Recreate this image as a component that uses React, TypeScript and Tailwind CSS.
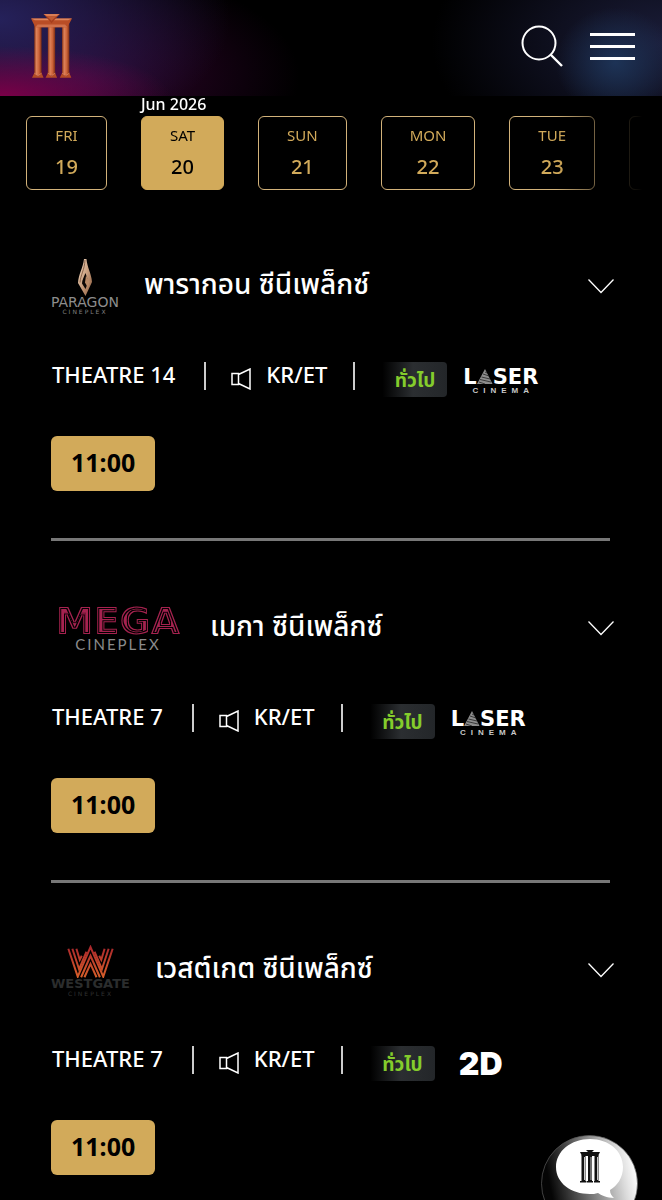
import { useState, type ReactNode } from 'react';

interface ShowDate {
  day: string;
  date: string;
  month?: string;
}

interface Cinema {
  id: string;
  name: string;
  logo: ReactNode;
  theatre: string;
  sound: string;
  system: 'laser' | '2d';
  times: string[];
}

const DATES: ShowDate[] = [
  { day: 'FRI', date: '19' },
  { day: 'SAT', date: '20', month: 'Jun 2026' },
  { day: 'SUN', date: '21' },
  { day: 'MON', date: '22' },
  { day: 'TUE', date: '23' }
];

function PillarLogo() {
  return (
    <svg viewBox="0 0 124 196" className="w-[41px] h-[66px]" aria-hidden="true">
      <defs>
        <linearGradient id="copper" x1="0" x2="1" y1="0" y2="0">
          <stop offset="0" stopColor="#8f3819" />
          <stop offset="0.3" stopColor="#dd8159" />
          <stop offset="0.65" stopColor="#cb6238" />
          <stop offset="1" stopColor="#7d2c12" />
        </linearGradient>
      </defs>
      {[10, 51, 94].map((x) => (
        <g key={x}>
          <rect x={x} y="32" width="22" height="154" fill="url(#copper)" />
          <path d={`M${x} 180 L${x - 7} 194 H${x + 28} L${x + 22} 180 L${x + 11} 188 Z`} fill="#b34b25" />
          <path d={`M${x} 180 L${x + 11} 188 L${x + 22} 180`} fill="none" stroke="#e0916c" strokeWidth="2" />
        </g>
      ))}
      <path d="M0 15 H124 L110 41 H13 Z" fill="#b94d26" />
      <path d="M0 15 H124 L112 20 H12 Z" fill="#dd865e" />
      <path d="M13 41 L20 33 H103 L110 41 Z" fill="#d0704a" />
      <path d="M38 1 H87 L62 29 Z" fill="#a83e1d" />
      <path d="M38 1 H87 L77 8 H48 Z" fill="#d97d55" />
      <path d="M48 8 H77 L62 22 Z" fill="#c05c35" />
    </svg>
  );
}

function ParagonLogo() {
  return (
    <div className="flex flex-col items-center text-center pt-1">
      <svg viewBox="0 0 28 74" className="w-[14px] h-[37px]" aria-hidden="true">
        <defs>
          <linearGradient id="flame" x1="0" x2="1" y1="0" y2="1">
            <stop offset="0" stopColor="#f3dcc4" />
            <stop offset="0.5" stopColor="#c99f7f" />
            <stop offset="1" stopColor="#8a5a3c" />
          </linearGradient>
        </defs>
        <path d="M12 0 H17 C18 16 27 30 28 46 L15 74 L0 48 C1 30 10 18 12 0 Z" fill="url(#flame)" />
        <path d="M15 28 C12 36 8 42 8 49 L15 60 L20 47 C20 40 17 35 15 28 Z" fill="#0c0705" />
        <path d="M16 33 L14 47 L20 58 L23 45 Z" fill="#b98a67" />
        <path d="M14 2 C13 22 5 32 4 47" fill="none" stroke="#6f4730" strokeWidth="1.5" />
      </svg>
      <span className="font-['DejaVu_Sans'] text-[14px] leading-3 text-[#8d8d8d]">PARAGON</span>
      <span className="font-['DejaVu_Sans'] text-[6px] leading-[7px] tracking-[2px] text-[#808080]">CINEPLEX</span>
    </div>
  );
}

function MegaLogo() {
  return (
    <div className="flex flex-col items-center pt-1">
      <svg viewBox="0 0 134 30" className="w-[134px] h-[30px]" role="img" aria-label="MEGA">
        <defs>
          {/* Outline ring with a lit core inside each stroke */}
          <filter id="neon" x="0" y="0" width="1" height="1">
            <feMorphology in="SourceGraphic" operator="erode" radius="1" result="inner" />
            <feComposite in="SourceGraphic" in2="inner" operator="out" result="ring" />
            <feMorphology in="SourceGraphic" operator="erode" radius="2" result="core" />
            <feMerge>
              <feMergeNode in="ring" />
              <feMergeNode in="core" />
            </feMerge>
          </filter>
        </defs>
        <text
          x="67"
          y="28"
          textAnchor="middle"
          fontFamily="DejaVu Sans"
          fontWeight="700"
          fontSize="38"
          fill="#a5224f"
          filter="url(#neon)"
        >
          MEGA
        </text>
      </svg>
      <span className="font-['Lato'] text-[15px] leading-4 tracking-[2px] text-[#8b8b8b]">CINEPLEX</span>
    </div>
  );
}

function WestgateLogo() {
  return (
    <div className="flex flex-col items-center pt-1">
      <svg viewBox="0 0 140 98" className="w-[47px] h-[33px]" aria-hidden="true">
        <defs>
          <linearGradient id="ember" x1="0" x2="0" y1="0" y2="98" gradientUnits="userSpaceOnUse">
            <stop offset="0" stopColor="#a8242c" />
            <stop offset="1" stopColor="#d8602a" />
          </linearGradient>
        </defs>
        <g fill="none" stroke="url(#ember)" strokeWidth="6">
          <path d="M4 11 L32 94 L70 6 L108 94 L136 11" />
          <path d="M16 11 L36 72 L58 20" />
          <path d="M28 11 L38 44 L44 32" />
          <path d="M124 11 L104 72 L82 20" />
          <path d="M112 11 L102 44 L96 32" />
          <path d="M42 96 L70 32 L98 96" />
          <path d="M52 96 L70 56 L88 96" />
        </g>
      </svg>
      <span className="font-['DejaVu_Sans'] font-bold text-[13px] leading-3 text-[#2b2d2d]">WESTGATE</span>
      <span className="font-['DejaVu_Sans'] text-[6px] leading-[7px] tracking-[2px] text-[#303232]">CINEPLEX</span>
    </div>
  );
}

function LaserLogo() {
  return (
    <div className="flex flex-col items-center text-white">
      <span className="flex items-center font-['DejaVu_Sans'] font-bold text-[21px] leading-4">
        L
        <svg viewBox="0 0 32 30" className="w-4 h-[15px]" role="img" aria-label="A">
          <path d="M16 0 L31 30 H0 Z" fill="#8c8c8c" />
          <path d="M16 6 L20 8 M12 10 L24 14 M9 16 L26 20 M6 21 L28 26 M4 26 L16 30" stroke="#1c1c1c" strokeWidth="1.5" />
        </svg>
        SER
      </span>
      <span className="font-['Liberation_Sans'] font-bold text-[8px] leading-[9px] tracking-[5px] pl-[5px] pt-px text-[#c9c9c9]">CINEMA</span>
    </div>
  );
}

function SpeakerIcon() {
  return (
    <svg viewBox="0 0 20 22" className="w-5 h-[22px] self-end" fill="none" stroke="white" strokeWidth="1.5" aria-hidden="true">
      <path d="M1 5.5 H7.5 V16.5 H1 Z M7.5 6.5 L19 1 V21 L7.5 15.5" />
    </svg>
  );
}

const CINEMAS: Cinema[] = [
  {
    id: 'paragon',
    name: 'พารากอน ซีนีเพล็กซ์',
    logo: <ParagonLogo />,
    theatre: 'THEATRE 14',
    sound: 'KR/ET',
    system: 'laser',
    times: ['11:00']
  },
  {
    id: 'mega',
    name: 'เมกา ซีนีเพล็กซ์',
    logo: <MegaLogo />,
    theatre: 'THEATRE 7',
    sound: 'KR/ET',
    system: 'laser',
    times: ['11:00']
  },
  {
    id: 'westgate',
    name: 'เวสต์เกต ซีนีเพล็กซ์',
    logo: <WestgateLogo />,
    theatre: 'THEATRE 7',
    sound: 'KR/ET',
    system: '2d',
    times: ['11:00']
  }
];

function Header() {
  return (
    <header className="h-24 pl-[31px] pr-[27px] flex items-center justify-between bg-black bg-[radial-gradient(ellipse_170px_50px_at_0%_100%,#7a0048_0%,transparent_100%),radial-gradient(ellipse_230px_130px_at_0%_20%,#25215a_0%,transparent_100%),radial-gradient(ellipse_220px_110px_at_12%_80%,#33042f_0%,transparent_100%),radial-gradient(ellipse_60px_55px_at_93%_65%,#1d3356_0%,transparent_100%),radial-gradient(ellipse_230px_140px_at_100%_45%,#1b1d3a_0%,transparent_100%)]">
      <a href="#home" aria-label="Home" className="-mt-1">
        <PillarLogo />
      </a>
      <div className="flex items-center gap-[27px] -mt-1">
        <button type="button" aria-label="Search">
          <svg viewBox="0 0 42 42" className="w-[42px] h-[42px]" fill="none" stroke="white" strokeWidth="2" aria-hidden="true">
            <circle cx="18" cy="18" r="16.5" />
            <path d="M29.5 29.5 L41 41" strokeWidth="2.4" />
          </svg>
        </button>
        <button type="button" aria-label="Menu" className="flex flex-col gap-[9px] w-[45px]">
          <span className="block h-[3px] w-full bg-white" />
          <span className="block h-[3px] w-full bg-white" />
          <span className="block h-[3px] w-full bg-white" />
        </button>
      </div>
    </header>
  );
}

function DateStrip() {
  const [selected, setSelected] = useState('20');

  return (
    <nav
      aria-label="Dates"
      className="flex items-end gap-[34px] pl-[26px] overflow-hidden [mask-image:linear-gradient(to_right,black_84%,transparent_97%)]"
    >
      {DATES.map((item) => (
        <div key={item.date} className="shrink-0">
          {item.month && <div className="h-5 text-base leading-4 font-medium">{item.month}</div>}
          <button
            type="button"
            onClick={() => setSelected(item.date)}
            className={`h-[74px] px-7 flex flex-col items-center justify-center rounded-md border ${
              selected === item.date ? 'border-[#d2aa5a] bg-[#d2aa5a] text-black' : 'border-[#d2b27a] text-[#d2aa5a]'
            }`}
          >
            <span className="text-[15px] leading-7">{item.day}</span>
            <span className="text-xl leading-9 font-medium">{item.date}</span>
          </button>
        </div>
      ))}
      <div className="shrink-0 w-20 h-[74px] rounded-md border border-[#d2b27a]" />
    </nav>
  );
}

function CinemaSection({ cinema }: { cinema: Cinema }) {
  const [open, setOpen] = useState(true);

  return (
    <section className="pb-[47px] mb-14 border-b-3 border-[#777777] last:border-b-0 last:mb-0 last:pb-6">
      {/* Cinema name */}
      <div className="h-15 flex items-center gap-[25px] -mr-1">
        {cinema.logo}
        <h2 className="text-[28px] leading-10 font-medium pb-1">{cinema.name}</h2>
        <button
          type="button"
          aria-label="Toggle showtimes"
          aria-expanded={open}
          onClick={() => setOpen(!open)}
          className={`ml-auto pt-0.5 ${open ? '' : 'rotate-180'}`}
        >
          <svg viewBox="0 0 26 15" className="w-[26px] h-[15px]" fill="none" stroke="white" strokeWidth="1.3" aria-hidden="true">
            <path d="M0.500 0.500 L13 13.500 L25.500 0.500" />
          </svg>
        </button>
      </div>

      {open && (
        <>
          {/* Theatre, sound and system */}
          <div className="mt-[47px] h-[35px] pl-px flex items-start text-[22px] leading-6">
            <span className="h-7 pr-[29px] border-r-2 border-white/80 font-medium">{cinema.theatre}</span>
            <span className="h-7 pl-[25px] pr-[26px] border-r-2 border-white/80 flex gap-[15px] font-medium">
              <SpeakerIcon />
              {cinema.sound}
            </span>
            <span className="ml-6 w-17 h-[35px] pr-3 rounded-sm flex items-center justify-end bg-[linear-gradient(to_right,transparent_5%,#2b2e31_50%,#232629_100%)] text-[#84cc2c] text-[19px] font-bold">
              ทั่วไป
            </span>
            <div className={`h-[35px] flex items-center ${cinema.system === 'laser' ? 'ml-4 pt-1' : 'ml-6'}`}>
              {cinema.system === 'laser' ? (
                <LaserLogo />
              ) : (
                <span className="font-['Inter'] font-black text-[32px] leading-8">2D</span>
              )}
            </div>
          </div>

          {/* Showtimes */}
          <div className="mt-[39px] flex flex-wrap gap-4">
            {cinema.times.map((time) => (
              <button
                key={time}
                type="button"
                className="h-[55px] px-5 pb-1 rounded-md bg-[#d2aa5a] text-black text-[25px] leading-8 font-bold"
              >
                {time}
              </button>
            ))}
          </div>
        </>
      )}
    </section>
  );
}

function ChatButton() {
  return (
    <button type="button" aria-label="Chat" className="fixed right-6 -bottom-8 z-10">
      <svg viewBox="0 0 97 97" className="w-[97px] h-[97px]" aria-hidden="true">
        <defs>
          <linearGradient id="ball" x1="0" x2="1" y1="0.6" y2="0.4">
            <stop offset="0.1" stopColor="#050505" />
            <stop offset="0.5" stopColor="#777777" />
            <stop offset="0.85" stopColor="#dcdcdc" />
            <stop offset="1" stopColor="#ffffff" />
          </linearGradient>
        </defs>
        <circle cx="48.5" cy="48.5" r="48" fill="url(#ball)" stroke="#5b5b5b" strokeWidth="0.7" />
        <path
          d="M49 4 C68 4 82 16 82 32 C82 43 76 51 69 55 C69 59 71 61 73 63 C66 63 60 60 57 58 C54 59 52 59 49 59 C30 59 15 48 15 32 C15 16 30 4 49 4 Z"
          fill="white"
        />
        <g fill="#111111">
          <path d="M39 17 H59 L57 21 H41 Z M45 15 H53 L49 19 Z" />
          <path d="M40.5 20 H44.5 V46 H40.5 Z M47 20 H51 V46 H47 Z M53.5 20 H57.5 V46 H53.5 Z" />
          <path d="M39 46 H45.5 V47.5 H39 Z M46 46 H52 V47.5 H46 Z M53 46 H59 V47.5 H53 Z" />
        </g>
        <path d="M43.5 22 V45 M50 22 V45 M56.5 22 V45" stroke="#c9c9c9" strokeWidth="1" />
      </svg>
    </button>
  );
}

export default function App() {
  return (
    <div className="min-h-screen bg-black text-white font-['Noto_Sans','Noto_Sans_Thai',sans-serif]">
      <Header />
      <DateStrip />
      <main className="mt-[65px] pl-[51px] pr-[52px]">
        {CINEMAS.map((cinema) => (
          <CinemaSection key={cinema.id} cinema={cinema} />
        ))}
      </main>
      <ChatButton />
    </div>
  );
}
